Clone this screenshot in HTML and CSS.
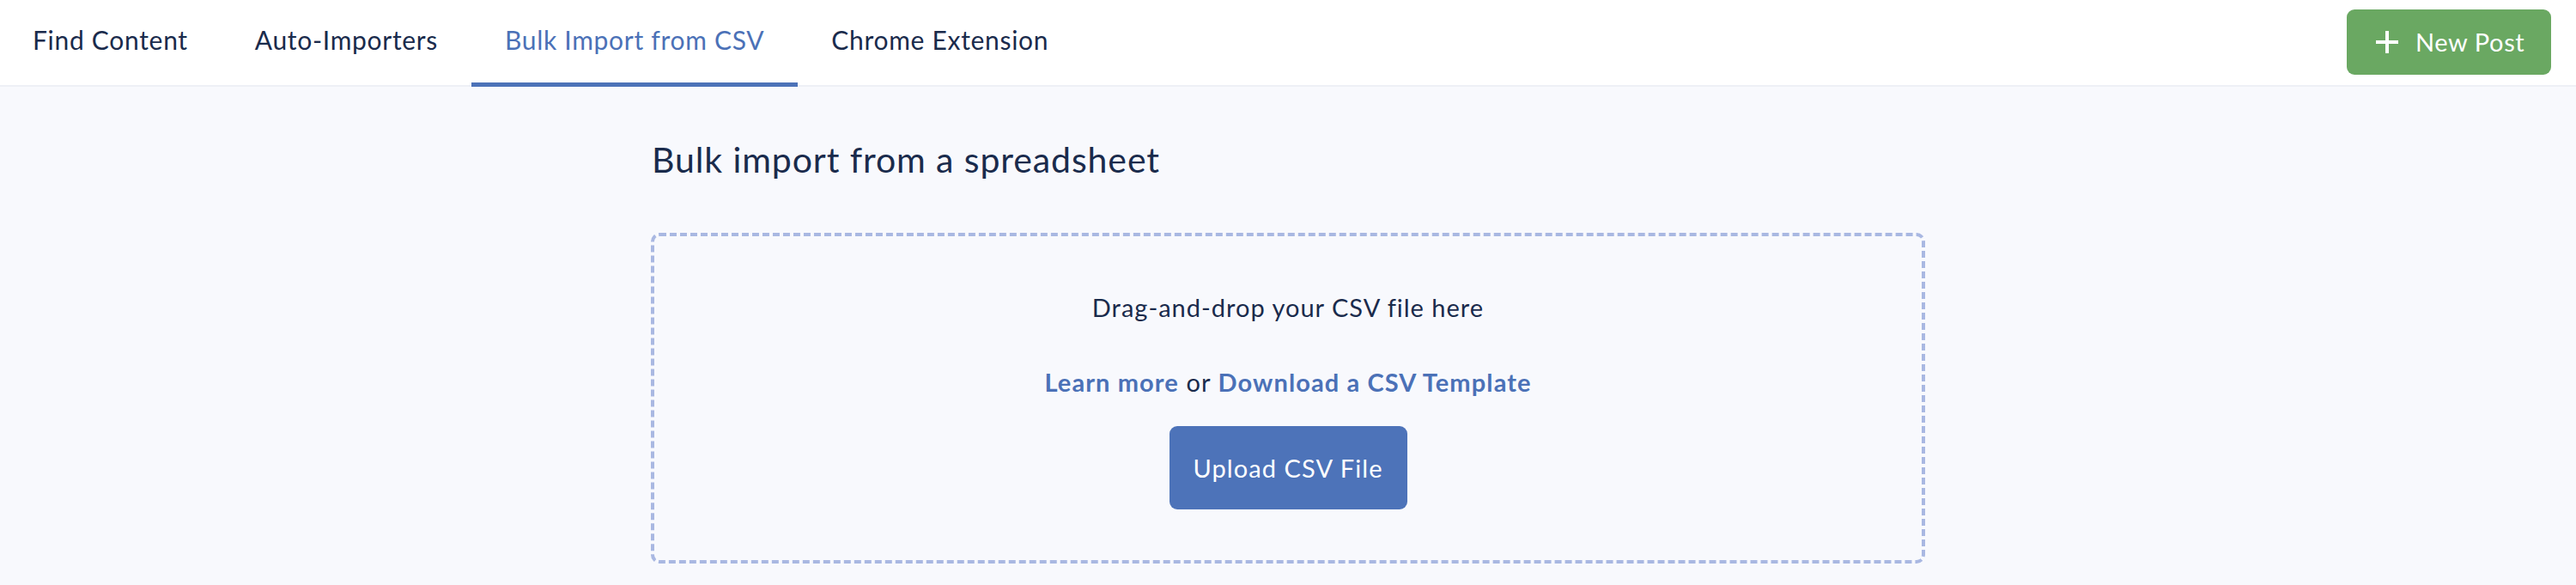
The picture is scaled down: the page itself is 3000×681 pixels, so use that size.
FILE: index.html
```html
<!DOCTYPE html>
<html lang="en">
<head>
<meta charset="utf-8">
<title>Bulk Import from CSV</title>
<link rel="stylesheet" href="styles.css">
</head>
<body>
<header class="topbar">
  <nav class="tabs">
    <a class="tab" href="#">Find Content</a>
    <a class="tab" href="#">Auto-Importers</a>
    <a class="tab tab-active" href="#">Bulk Import from CSV</a>
    <a class="tab" href="#">Chrome Extension</a>
  </nav>
  <button class="new-post" type="button">
    <svg class="plus" width="28" height="28" viewBox="0 0 28 28" aria-hidden="true"><path d="M14 1v26M1 14h26" stroke="#fff" stroke-width="4" fill="none"/></svg>
    <span>New Post</span>
  </button>
</header>
<main class="main">
  <div class="container">
    <h1 class="title">Bulk import from a spreadsheet</h1>
    <div class="dropzone">
      <p class="drop-text">Drag-and-drop your CSV file here</p>
      <p class="links"><a href="#" class="link">Learn more</a> or <a href="#" class="link">Download a CSV Template</a></p>
      <button class="upload" type="button">Upload CSV File</button>
    </div>
  </div>
</main>
</body>
</html>
```
FILE: styles.css
```css
* { box-sizing: border-box; }
html, body { margin: 0; padding: 0; }
body {
  background: #f8f9fd;
  font-family: "Lato", "Open Sans", sans-serif;
  color: #1a2b4c;
}
.topbar {
  display: flex;
  justify-content: space-between;
  align-items: center;
  height: 101px;
  background: #fff;
  border-bottom: 2px solid #eef0f6;
}
.tabs {
  display: flex;
  align-self: flex-start;
  height: 101px;
  margin-left: -1px;
}
.tab {
  display: flex;
  align-items: center;
  padding: 0 39px 5px;
  height: 101px;
  border-bottom: 5px solid transparent;
  font-size: 30px;
  letter-spacing: 0.7px;
  color: #1a2b4c;
  text-decoration: none;
}
.tab-active {
  color: #4b71b7;
  border-bottom-color: #4c72b8;
}
.new-post {
  display: flex;
  align-items: center;
  gap: 19px;
  width: 238px;
  height: 76px;
  margin-right: 29px;
  margin-top: -2px;
  padding: 0 0 0 33px;
  border: none;
  border-radius: 9px;
  background: #6aa862;
  color: #fff;
  font-family: inherit;
  font-size: 29px;
  letter-spacing: 0.6px;
  cursor: pointer;
}
.plus { display: block; flex: none; }
.main { padding-top: 61px; }
.container {
  width: 1484px;
  margin: 0 auto;
}
.title {
  margin: 0 0 0 1px;
  font-size: 41px;
  line-height: 48px;
  font-weight: 400;
  letter-spacing: 0.9px;
  color: #1a2b4c;
}
.dropzone {
  margin-top: 61px;
  border: 4px dashed #a9b8e2;
  border-radius: 10px;
  padding: 65px 0 59px;
  display: flex;
  flex-direction: column;
  align-items: center;
}
.drop-text {
  margin: 0;
  font-size: 29px;
  line-height: 36px;
  letter-spacing: 1px;
  color: #1a2b4c;
}
.links {
  margin: 51px 0 0;
  font-size: 29px;
  line-height: 36px;
  letter-spacing: 1.1px;
  color: #1a2b4c;
}
.link {
  color: #4b71b7;
  font-weight: 700;
  text-decoration: none;
}
.upload {
  margin-top: 33px;
  width: 277px;
  height: 97px;
  border: none;
  border-radius: 9px;
  background: #4d73b9;
  color: #fff;
  font-family: inherit;
  font-size: 29px;
  letter-spacing: 1.1px;
  cursor: pointer;
}
```
